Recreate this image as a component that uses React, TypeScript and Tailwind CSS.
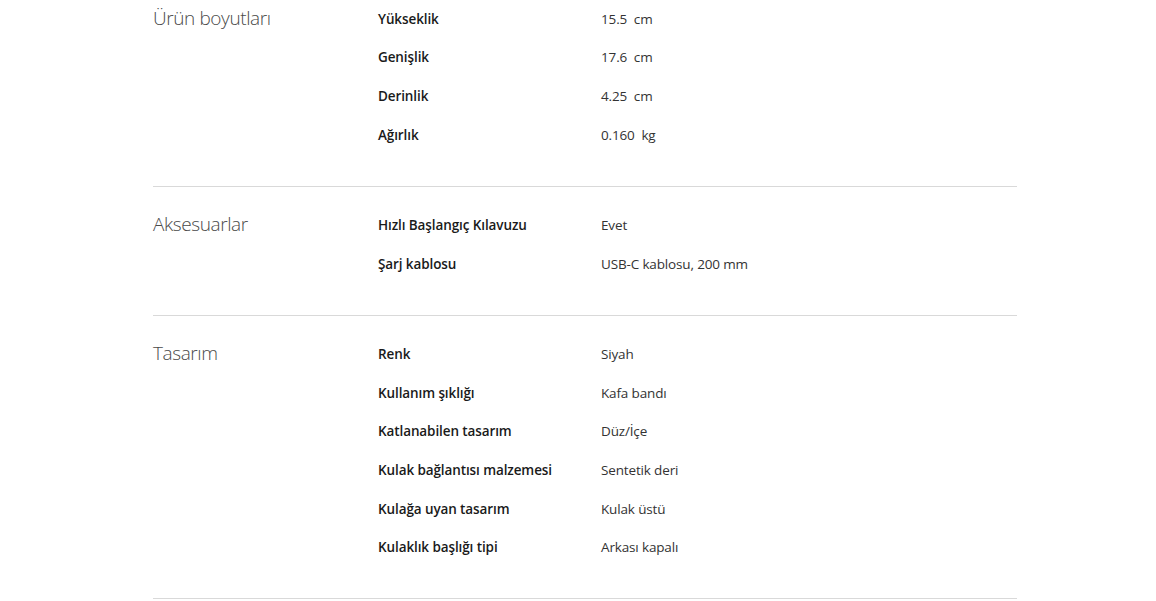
import React from 'react';

type Spec = { label: string; value: string };
type Section = { title: string; specs: Spec[] };

const sections: Section[] = [
  {
    title: 'Ürün boyutları',
    specs: [
      { label: 'Yükseklik', value: '15.5\u00a0 cm' },
      { label: 'Genişlik', value: '17.6\u00a0 cm' },
      { label: 'Derinlik', value: '4.25\u00a0 cm' },
      { label: 'Ağırlık', value: '0.160\u00a0 kg' },
    ],
  },
  {
    title: 'Aksesuarlar',
    specs: [
      { label: 'Hızlı Başlangıç Kılavuzu', value: 'Evet' },
      { label: 'Şarj kablosu', value: 'USB-C kablosu, 200 mm' },
    ],
  },
  {
    title: 'Tasarım',
    specs: [
      { label: 'Renk', value: 'Siyah' },
      { label: 'Kullanım şıklığı', value: 'Kafa bandı' },
      { label: 'Katlanabilen tasarım', value: 'Düz/İçe' },
      { label: 'Kulak bağlantısı malzemesi', value: 'Sentetik deri' },
      { label: 'Kulağa uyan tasarım', value: 'Kulak üstü' },
      { label: 'Kulaklık başlığı tipi', value: 'Arkası kapalı' },
    ],
  },
];

const SpecSection = ({ section }: { section: Section }) => (
  <div className="grid grid-cols-[225px_223px_1fr] border-b border-[#d9d9d9] pt-[19px] pb-[31.5px]">
    <h3 className="text-[19px] font-light leading-[37px] tracking-[-0.4px] text-[#4a4a4a]">
      {section.title}
    </h3>
    <div className="col-span-2 flex flex-col">
      {section.specs.map((spec) => (
        <div key={spec.label} className="grid h-[38.7px] grid-cols-[223px_1fr] items-center text-[13.5px]">
          <span className="font-semibold tracking-[-0.1px] text-[#1a1a1a]">{spec.label}</span>
          <span className="whitespace-pre tracking-[-0.15px] text-[#333333]">{spec.value}</span>
        </div>
      ))}
    </div>
  </div>
);

export default function App() {
  return (
    <div className="min-h-screen bg-white font-['Open_Sans',sans-serif]">
      <div className="-mt-[19.5px] ml-[153px] w-[864px]">
        {sections.map((section) => (
          <SpecSection key={section.title} section={section} />
        ))}
      </div>
    </div>
  );
}
